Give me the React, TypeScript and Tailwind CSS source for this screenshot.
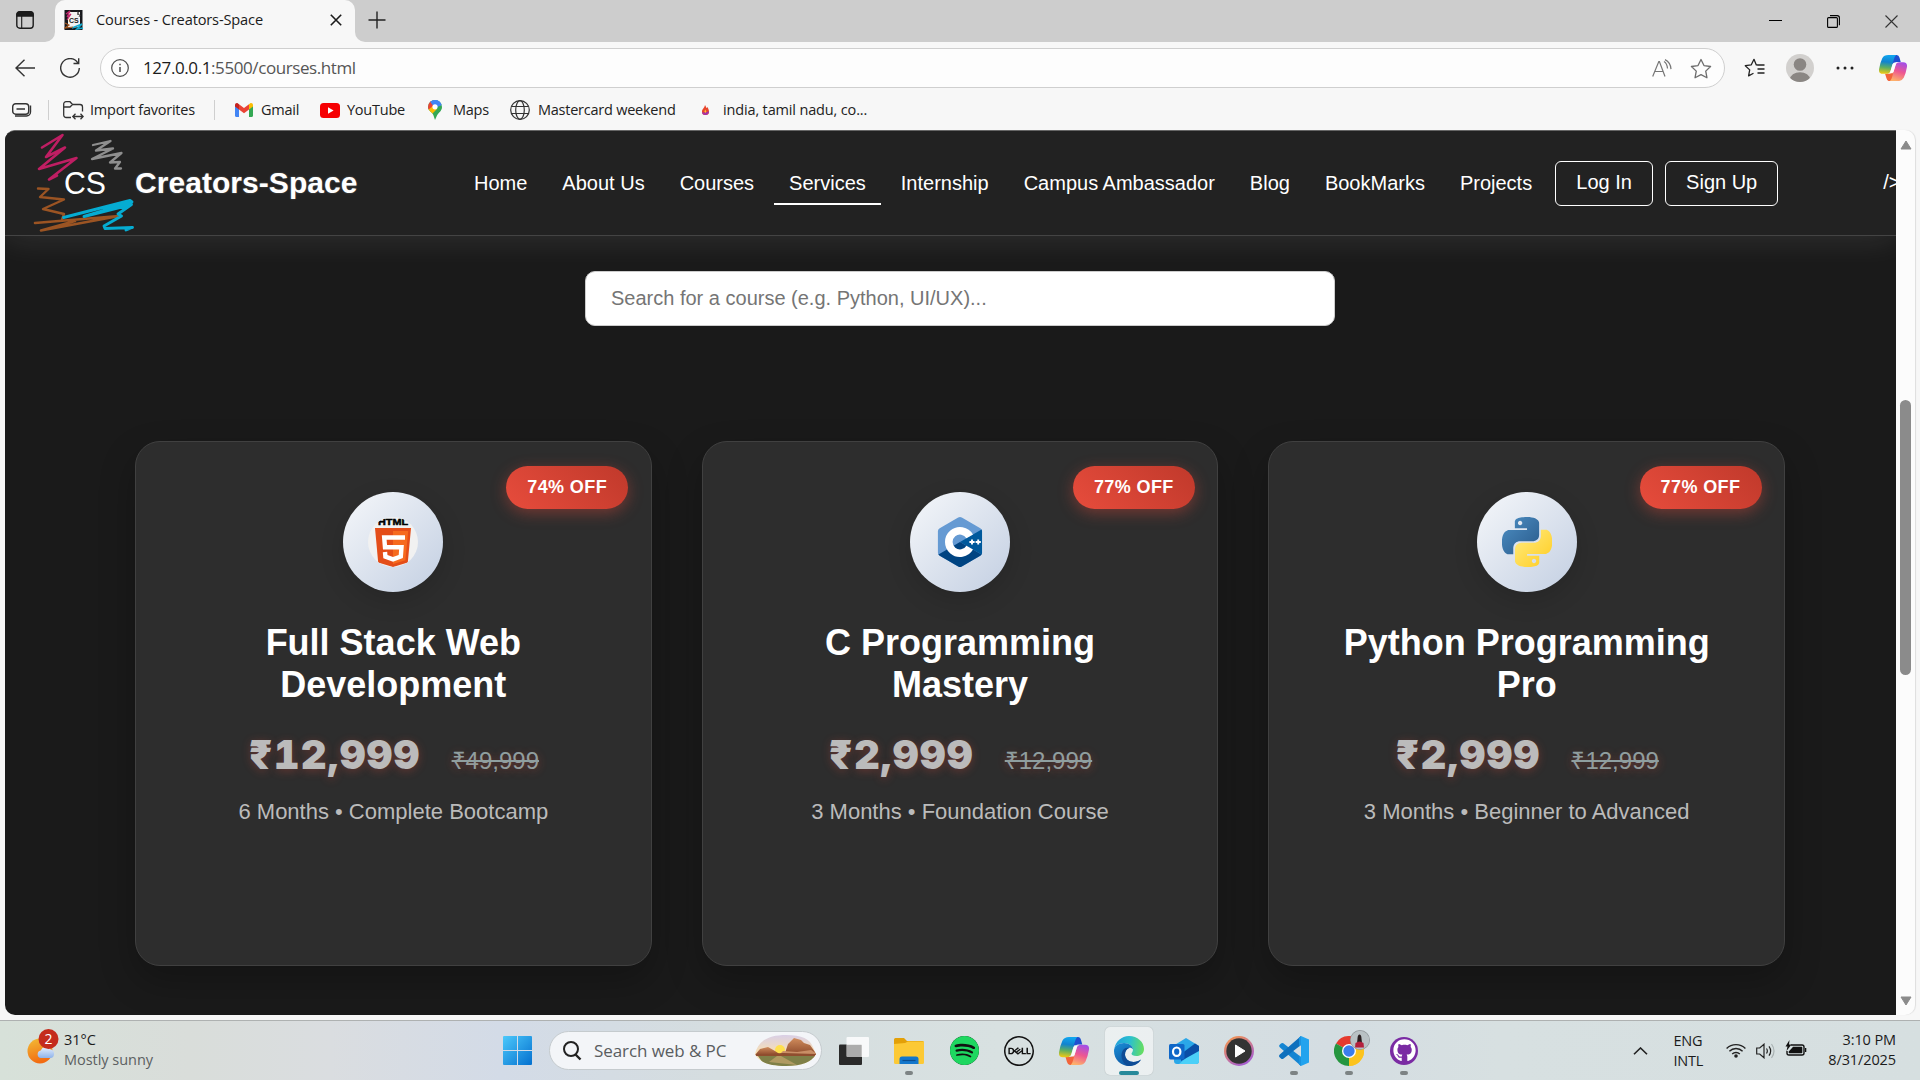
import React from "react";
import { SiDell, SiSpotify } from "react-icons/si";
import { FaGithub } from "react-icons/fa";

/* ---------- browser chrome icons ---------- */

function TabActionsIcon() {
  return (
    <svg width="18" height="18" viewBox="0 0 18 18" fill="none" stroke="#1b1b1b" strokeWidth="1.4">
      <rect x="0.8" y="0.8" width="16.4" height="16.4" rx="3" />
      <path d="M1 3.5A2.6 2.6 0 0 1 3.5 1h11A2.6 2.6 0 0 1 17 3.500V5H1z" fill="#1b1b1b" />
      <path d="M5.700 5v12" strokeWidth="1.1" />
    </svg>
  );
}

function Favicon() {
  return (
    <svg width="20" height="20" viewBox="0 0 20 20" fill="none">
      <rect x="0.500" width="18" height="20" fill="#17181c" />
      <path d="M4 2h12v15l-12 1z" fill="#f3f3f3" />
      <path d="M2 4l4-3-3 6 4-3-4 6" stroke="#c2266b" strokeWidth="1.2" />
      <path d="M13 2l2 1-2 1 3 1-1 2" stroke="#555" strokeWidth="1" />
      <text x="5" y="12.500" fontSize="7" fontWeight="700" fill="#222" fontFamily="Liberation Sans">CS</text>
      <path d="M8 18l10-4-5 5 6-1" stroke="#12abd0" strokeWidth="1.500" />
      <path d="M1 13l4 2-4 3 8-1" stroke="#a3561f" strokeWidth="1.2" />
    </svg>
  );
}

function StarPath({ d = "M10 1.300l2.700 5.500 6 .9-4.400 4.200 1.100 6L10 15.100 4.600 17.900l1.100-6L1.300 7.700l6-.9z" }: { d?: string }) {
  return <path d={d} />;
}

function CopilotIcon({ w = 30, id }: { w?: number; id: string }) {
  return (
    <svg width={w} height={(w * 28) / 30} viewBox="0 0 30 28">
      <defs>
        <linearGradient id={id + "l"} x1="0.300" y1="0" x2="0.200" y2="1">
          <stop offset="0" stopColor="#10a5ee" />
          <stop offset="0.350" stopColor="#1183cf" />
          <stop offset="0.650" stopColor="#5cae62" />
          <stop offset="1" stopColor="#f6cb10" />
        </linearGradient>
        <linearGradient id={id + "r"} x1="0.700" y1="0" x2="0.400" y2="1">
          <stop offset="0" stopColor="#a24ee8" />
          <stop offset="0.500" stopColor="#ee5791" />
          <stop offset="1" stopColor="#fdb06a" />
        </linearGradient>
      </defs>
      <path d="M12 0H19Q21.300 0 22 3L23.300 7.500H19Q16 7.500 15 10L12 8z" fill="#1f4fd0" />
      <path d="M18 28H11Q8.800 28 8 25L6.500 20H11Q14 20 15 18L18 20z" fill="#f2643a" />
      <path d="M10 0H18.500Q16.700 1 15.800 5L12.500 16.500Q11.500 20.200 8 20.200H4Q-.8 20 .1 15Q1.300 8 3.500 3.500Q5.300 0 10 0Z" fill={`url(#${id}l)`} />
      <path d="M20 28H11.500Q13.300 27 14.200 23L17.500 11.500Q18.500 7.800 22 7.800H26Q30.800 8 29.900 13Q28.700 20 26.500 24.500Q24.700 28 20 28Z" fill={`url(#${id}r)`} />
      <path d="M15.200 8.300L18.300 9 15 19.500 11.800 19z" fill="#fff" fillOpacity="0.850" />
    </svg>
  );
}

function GmailIcon() {
  return (
    <svg width="18" height="14" viewBox="0 0 18 14">
      <path d="M0 2v10.800c0 .7.500 1.200 1.200 1.200H4V5.500z" fill="#4285f4" />
      <path d="M18 2v10.800c0 .7-.5 1.200-1.200 1.200H14V5.500z" fill="#34a853" />
      <path d="M14 1.200V6.500l4-3V2c0-1.700-1.800-2.500-3-1.500z" fill="#fbbc04" />
      <path d="M0 2v1.500l4 3V1.200L3 .5C1.800-.5 0 .3 0 2z" fill="#c5221f" />
      <path d="M4 6.500V1.200l5 3.800 5-3.800v5.300l-5 3.800z" fill="#ea4335" />
    </svg>
  );
}

function MapsIcon() {
  return (
    <svg width="14" height="20" viewBox="0 0 14 20">
      <defs>
        <clipPath id="pin">
          <path d="M7 0a7 7 0 0 1 7 7c0 4-3.500 5.500-5 8.500L7 20l-1.500-4.500C4.500 12 0 11 0 7a7 7 0 0 1 7-7z" />
        </clipPath>
      </defs>
      <g clipPath="url(#pin)">
        <rect width="14" height="20" fill="#34a853" />
        <path d="M0 0h14v5L7 8z" fill="#4285f4" />
        <path d="M0 0l2-1 4 7-6 5z" fill="#ea4335" />
        <path d="M0 10l5-4 4 3-6 6H0z" fill="#fbbc04" />
        <path d="M2 1.500L6 0h8L6 7z" fill="#4285f4" />
      </g>
      <circle cx="7" cy="6.800" r="2.600" fill="#fff" />
    </svg>
  );
}

/* ---------- site artwork ---------- */

function SiteLogo() {
  return (
    <svg className="mb-[3px] shrink-0" width="104" height="100" viewBox="32 131 104 100" fill="none" strokeLinecap="round" strokeLinejoin="round">
      <path d="M42 146.500L62.500 134 46 156 65 146.500 39 168 76.500 157 49 178.500 57 174.500" stroke="#bf1e63" strokeWidth="2.600" />
      <path d="M93 144L110.500 140 96 149.500 113 147.500 92 158 121.500 152 110 161.500 120 161 115 167.500 121 167.500" stroke="#8e8e8e" strokeWidth="2.300" />
      <path d="M38 187.500L48.500 188 40 196 64 198.500 43 208 64 213 62 218.500" stroke="#9b5423" strokeWidth="2.400" />
      <path d="M35 222L119 215 41 229.500 75 220" stroke="#9b5423" strokeWidth="2.600" />
      <path d="M63.500 216.500L130 199.500 132 201 84 215.500 131.500 203.500 118 213 121.500 215 104 225 105 227.500 132.500 226.500 126 229" stroke="#05acd2" strokeWidth="2.900" />
      <text x="64" y="192.500" fontSize="30.500" fill="#ffffff" fontFamily="Liberation Sans" textLength="42" lengthAdjust="spacingAndGlyphs">CS</text>
    </svg>
  );
}

function HtmlLogo() {
  return (
    <svg width="50" height="50" viewBox="0 0 50 50">
      <defs>
        <clipPath id="htmlDisc">
          <circle cx="25" cy="25" r="25" />
        </clipPath>
      </defs>
      <g clipPath="url(#htmlDisc)">
        <rect width="50" height="50" fill="#f1f1f1" />
        <text x="10" y="8" fontSize="9.800" fontWeight="800" fill="#000" stroke="#000" strokeWidth="0.500" fontFamily="Liberation Sans" textLength="30" lengthAdjust="spacingAndGlyphs">HTML</text>
        <path d="M7 11h36l-3.200 34.500L25 50 10.200 45.500z" fill="#e44d18" />
        <path d="M25 14h15.200l-2.800 29.300L25 47z" fill="#f66a1e" />
        <path d="M37 20.500H16.200l.8 9.700h16.500l-.7 9.300-7.800 2.800-7.600-2.600-.4-4.700" fill="none" stroke="#fff" strokeWidth="4.400" />
      </g>
    </svg>
  );
}

function CppLogo() {
  return (
    <svg width="50" height="50" viewBox="0 0 50 50">
      <defs>
        <clipPath id="hex">
          <path d="M23.200.5q1.800-1 3.600 0l18.500 10.700q1.800 1 1.800 3.100v21.400q0 2.100-1.800 3.100L26.800 49.500q-1.800 1-3.600 0L4.700 38.800q-1.800-1-1.800-3.100V14.300q0-2.100 1.800-3.100z" />
        </clipPath>
      </defs>
      <g clipPath="url(#hex)">
        <rect width="50" height="50" fill="#659ad3" />
        <path d="M25 25L47 12.300V37.800z" fill="#00599c" />
        <path d="M3 37.700L25 25 47 37.700V50H3z" fill="#004482" />
      </g>
      <path d="M34.700 19.400A11.200 11.200 0 1 0 34.700 30.600" fill="none" stroke="#fff" strokeWidth="7.600" />
      <path d="M34.400 25h5.200M37 22.400v5.200M40.600 25h5.200M43.200 22.400v5.200" stroke="#fff" strokeWidth="1.900" />
    </svg>
  );
}

function PythonLogo() {
  return (
    <svg width="50" height="50" viewBox="0 0 24 24">
      <defs>
        <linearGradient id="pyBlue" x1="0" y1="0" x2="1" y2="1">
          <stop offset="0" stopColor="#4d8fc4" />
          <stop offset="1" stopColor="#28598a" />
        </linearGradient>
        <linearGradient id="pyYellow" x1="0" y1="0" x2="1" y2="1">
          <stop offset="0.200" stopColor="#ffe66f" />
          <stop offset="0.800" stopColor="#ffd233" />
        </linearGradient>
      </defs>
      <path
        fill="url(#pyBlue)"
        d="M14.25.18l.9.2.73.26.59.3.45.32.34.34.25.34.16.33.1.3.04.26.02.2-.01.13V8.5l-.05.63-.13.55-.21.46-.26.38-.3.31-.33.25-.35.19-.35.14-.33.1-.3.07-.26.04-.21.02H8.77l-.69.05-.59.14-.5.22-.41.27-.33.32-.27.35-.2.36-.15.37-.1.35-.07.32-.04.27-.02.21v3.06H3.17l-.21-.03-.28-.07-.32-.12-.35-.18-.36-.26-.36-.36-.35-.46-.32-.59-.28-.73-.21-.88-.14-1.05-.05-1.23.06-1.22.16-1.04.24-.87.32-.71.36-.57.4-.44.42-.33.42-.24.4-.16.36-.1.32-.05.24-.01h.16l.06.01h8.16v-.83H6.18l-.01-2.75-.02-.37.05-.34.11-.31.17-.28.25-.26.31-.23.38-.2.44-.18.51-.15.58-.12.64-.1.71-.06.77-.04.84-.02 1.27.05zm-6.3 1.98l-.23.33-.08.41.08.41.23.34.33.22.41.09.41-.09.33-.22.23-.34.08-.41-.08-.41-.23-.33-.33-.22-.41-.09-.41.09z"
      />
      <path
        fill="url(#pyYellow)"
        d="M21.1 6.11l.28.06.32.12.35.18.36.27.36.35.35.47.32.59.28.73.21.88.14 1.04.05 1.23-.06 1.23-.16 1.04-.24.86-.32.71-.36.57-.4.45-.42.33-.42.24-.4.16-.36.09-.32.05-.24.02-.16-.01h-8.22v.82h5.84l.01 2.76.02.36-.05.34-.11.31-.17.29-.25.25-.31.24-.38.2-.44.17-.51.15-.58.13-.64.09-.71.07-.77.04-.84.01-1.27-.04-1.07-.14-.9-.2-.73-.25-.59-.3-.45-.33-.34-.34-.25-.34-.16-.33-.1-.3-.04-.25-.02-.2.01-.13v-5.34l.05-.64.13-.54.21-.46.26-.38.3-.32.33-.24.35-.2.35-.14.33-.1.3-.06.26-.04.21-.02.13-.01h5.84l.69-.05.59-.14.5-.21.41-.28.33-.32.27-.35.2-.36.15-.36.1-.35.07-.32.04-.28.02-.21V6.07h2.09l.14.01zm-6.47 14.25l-.23.33-.08.41.08.41.23.33.33.23.41.08.41-.08.33-.23.23-.33.08-.41-.08-.41-.23-.33-.33-.23-.41-.08-.41.08z"
      />
    </svg>
  );
}

/* ---------- browser ---------- */

function TitleBar() {
  return (
    <div className="flex h-[42px] bg-[#cdcdcd]">
      <div className="w-[55px] bg-[#f7f7f7]">
        <div className="flex h-[42px] items-center rounded-br-[10px] bg-[#cdcdcd] pb-0.5 pl-4">
          <TabActionsIcon />
        </div>
      </div>
      <div className="flex w-[300px] items-center rounded-t-[10px] bg-[#f7f7f7] pb-[2px] pl-[9px]">
        <Favicon />
        <span className="ml-3 w-[170px] whitespace-nowrap text-[14.600px] tracking-[-0.150px] text-[#1b1b1b]">Courses - Creators-Space</span>
        <svg className="ml-[64px]" width="12" height="12" viewBox="0 0 12 12" stroke="#1b1b1b" strokeWidth="1.600">
          <path d="M.8.8l10.400 10.400M11.200.8L.8 11.200" />
        </svg>
      </div>
      <div className="flex-1 bg-[#f7f7f7]">
        <div className="flex h-[42px] items-center justify-between rounded-bl-[10px] bg-[#cdcdcd] pb-[3px] pl-[13px]">
          <svg width="18" height="18" viewBox="0 0 18 18" stroke="#222" strokeWidth="1.400">
            <path d="M9 .5v17M.5 9h17" />
          </svg>
          <div className="flex items-center gap-[45px] pr-[22px] pt-1">
            <svg width="13" height="13" viewBox="0 0 13 13"><path d="M0 5.500h13" stroke="#000" /></svg>
            <svg width="13" height="13" viewBox="0 0 13 13" fill="none" stroke="#000" strokeWidth="1.100">
              <rect x="0.600" y="2.600" width="9.800" height="9.800" rx="1" />
              <path d="M3 .6h7.200a2.200 2.200 0 0 1 2.200 2.200v7.400" />
            </svg>
            <svg width="13" height="13" viewBox="0 0 13 13" stroke="#333" strokeWidth="1.100"><path d="M.5.5l12 12M12.500.5l-12 12" /></svg>
          </div>
        </div>
      </div>
    </div>
  );
}

function AddressBar() {
  return (
    <div className="flex h-[52px] items-center bg-[#f7f7f7]">
      <svg className="ml-[15px]" width="20" height="18" viewBox="0 0 20 18" fill="none" stroke="#333" strokeWidth="1.400">
        <path d="M20 9H1M9.500.7L1 9l8.500 8.300" />
      </svg>
      <svg className="ml-[25px]" width="20" height="20" viewBox="0 0 20 20" fill="none" stroke="#333" strokeWidth="1.400">
        <path d="M17.800 4.800A9.300 9.300 0 1 0 19.300 10M18.700.3v5.200h-5.200" />
      </svg>
      <div className="ml-5 flex h-10 w-[1625px] items-center rounded-full border border-[#cfcfcf] bg-[#fdfdfd] pl-2.5">
        <svg width="18" height="18" viewBox="0 0 18 18" fill="none" stroke="#4a4a4a" strokeWidth="1.200">
          <circle cx="9" cy="9" r="8.300" />
          <path d="M9 8v5M9 4.800v1.400" strokeWidth="1.500" />
        </svg>
        <span className="ml-3.5 flex-1 whitespace-nowrap text-[17px] tracking-[-0.410px] text-[#555]">
          <span className="text-[#1b1b1b]">127.0.0.1</span>:5500/courses.html
        </span>
        <svg className="mr-[18px]" width="20" height="18" viewBox="0 0 20 18" fill="none" stroke="#767676" strokeWidth="1.200">
          <path d="M.7 17.500L6.800 2.500h.6l5.600 15M2.800 12.500h8.300M12 2.500c2 1.300 3.300 4 3.500 7M13 .6c3.500 1.800 5.800 5.500 6 9.500" />
        </svg>
        <svg className="mr-[12px]" width="22" height="21" viewBox="0 0 20 19" fill="none" stroke="#6d6d6d" strokeWidth="1.200" strokeLinejoin="round">
          <StarPath />
        </svg>
      </div>
      <svg className="ml-[19px]" width="21" height="20" viewBox="0 0 21 20" fill="none" stroke="#222" strokeWidth="1.300" strokeLinejoin="round">
        <path d="M14 7.200l-1.700-.3L10 1.300 7.300 6.800l-6 .9 4.400 4.200-1.100 6L9.500 15.300M12.500 7h8M13.500 11h7M13.500 15h7" />
      </svg>
      <svg className="ml-[21px]" width="28" height="28" viewBox="0 0 28 28">
        <defs><clipPath id="profile"><circle cx="14" cy="14" r="14" /></clipPath></defs>
        <circle cx="14" cy="14" r="14" fill="#d2d0ce" />
        <g fill="#8a8683" clipPath="url(#profile)">
          <circle cx="14" cy="10.500" r="6.300" />
          <ellipse cx="14" cy="25.500" rx="10" ry="7.300" />
        </g>
      </svg>
      <svg className="ml-[22px]" width="18" height="4" viewBox="0 0 18 4" fill="#222">
        <circle cx="2" cy="2" r="1.500" /><circle cx="9" cy="2" r="1.500" /><circle cx="16" cy="2" r="1.500" />
      </svg>
      <div className="ml-[25px]"><CopilotIcon w={28} id="cpA" /></div>
    </div>
  );
}

function FavoritesBar() {
  return (
    <div className="flex h-9 items-center whitespace-nowrap bg-[#f7f7f7] pb-[4px] text-[14.500px] tracking-[-0.240px] text-[#222]">
      <svg className="ml-3" width="20" height="15" viewBox="0 0 20 15" fill="none" stroke="#333" strokeWidth="1.400">
        <rect x="0.700" y="0.700" width="16" height="10.500" rx="3" />
        <path d="M4.500 6h8.500M18.500 2.500v6.500a4 4 0 0 1-4 4H3" />
      </svg>
      <div className="ml-4 h-5 w-px bg-[#cfcfcf]" />
      <svg className="ml-3.5" width="21" height="19" viewBox="0 0 21 19" fill="none" stroke="#333" strokeWidth="1.300">
        <path d="M8 16.500H3.200A2.500 2.500 0 0 1 .7 14V3A2.300 2.300 0 0 1 3 .7h4l2.500 2.800H17A2.500 2.500 0 0 1 19.500 6v4.500M.7 6H7l2.500-2.500M10 15.500h10M12.500 12.800L9.800 15.500l2.700 2.700M17.500 12.800l2.700 2.700-2.700 2.700" />
      </svg>
      <span className="ml-1.5 w-[106px]">Import favorites</span>
      <div className="ml-[18px] h-5 w-px bg-[#cfcfcf]" />
      <div className="ml-5"><GmailIcon /></div>
      <span className="ml-[8px] w-[59px]">Gmail</span>
      <svg width="20" height="15" viewBox="0 0 20 15"><rect width="20" height="15" rx="3.500" fill="#f60002" /><path d="M8 4.200l5.600 3.300L8 10.800z" fill="#fff" /></svg>
      <span className="ml-[7px] w-[81px]">YouTube</span>
      <MapsIcon />
      <span className="ml-[11px] w-[57px]">Maps</span>
      <svg width="20" height="20" viewBox="0 0 20 20" fill="none" stroke="#333" strokeWidth="1.200">
        <circle cx="10" cy="10" r="9.300" /><ellipse cx="10" cy="10" rx="4.300" ry="9.300" /><path d="M1.500 6.500h17M1.500 13.500h17" />
      </svg>
      <span className="ml-2 w-[164px]">Mastercard weekend</span>
      <svg width="7" height="10" viewBox="0 0 7 10">
        <path d="M3 0c1 1.500 1 2 1.500 3C5 3 5 2.500 5.300 2 6.500 4 7 5 7 6.500A3.400 3.400 0 0 1 3.500 10 3.400 3.400 0 0 1 0 6.500C0 4 2.500 3 3 0z" fill="#e8452c" />
        <path d="M0 7c2 1 5 .5 6.900-1A3.400 3.400 0 0 1 3.500 10 3.400 3.400 0 0 1 0 7z" fill="#a533a5" />
        <path d="M3.200 4.500l1.200 2-1 1.500-1-1.500z" fill="#ffc23d" />
      </svg>
      <span className="ml-3.5 tracking-[-0.150px]">india, tamil nadu, co...</span>
    </div>
  );
}

/* ---------- web page ---------- */

const links = ["Home", "About Us", "Courses", "Services", "Internship", "Campus Ambassador", "Blog", "BookMarks", "Projects"];

function SiteHeader() {
  return (
    <header className="relative flex h-[105px] items-center border-b border-[#444] bg-[#222] pl-[27px] text-white shadow-[0_4px_30px_rgba(255,255,255,0.1)]">
      <SiteLogo />
      <span className="-ml-px mb-px w-[324px] shrink-0 text-[30px] font-bold tracking-[0.050px] [text-shadow:0_0_2px_rgba(255,255,255,0.3)]">Creators-Space</span>
      <nav className="mb-px flex shrink-0 gap-[5px] whitespace-nowrap text-[20px]">
        {links.map((l) => (
          <a key={l} className={"border-b-2 px-[15px] pb-[5px] pt-[7px] leading-[30px] " + (l === "Services" ? "border-white" : "border-transparent")}>
            {l}
          </a>
        ))}
      </nav>
      <div className="ml-2 flex shrink-0 gap-3 whitespace-nowrap text-[20px]">
        <a className="flex h-[45px] w-[98px] items-center justify-center rounded-[6px] border border-white pb-0.5">Log In</a>
        <a className="flex h-[45px] w-[113px] items-center justify-center rounded-[6px] border border-white pb-0.5">Sign Up</a>
      </div>
      <span className="mb-0.5 ml-[105px] shrink-0 text-[20px]">/&gt;</span>
    </header>
  );
}

interface Course {
  name: string[];
  off: string;
  price: string;
  old: string;
  info: string;
  logo: React.ReactNode;
}

const courses: Course[] = [
  { name: ["Full Stack Web", "Development"], off: "74% OFF", price: "₹12,999", old: "₹49,999", info: "6 Months • Complete Bootcamp", logo: <HtmlLogo /> },
  { name: ["C Programming", "Mastery"], off: "77% OFF", price: "₹2,999", old: "₹12,999", info: "3 Months • Foundation Course", logo: <CppLogo /> },
  { name: ["Python Programming", "Pro"], off: "77% OFF", price: "₹2,999", old: "₹12,999", info: "3 Months • Beginner to Advanced", logo: <PythonLogo /> },
];

function CourseCard({ c }: { c: Course }) {
  return (
    <article className="relative flex h-[525px] flex-col items-center rounded-[25px] border border-[#404040] bg-[#2d2d2d] pt-[50px] text-center shadow-[0_15px_35px_rgba(0,0,0,0.25)]">
      <span className="absolute right-[22.500px] top-[24px] flex h-[43px] w-[122px] items-center justify-center rounded-full bg-[linear-gradient(45deg,#e74c3c,#c0392b)] text-[18px] font-bold tracking-[0.400px] text-white shadow-[0_4px_15px_rgba(231,76,60,0.4)]">
        {c.off}
      </span>
      <div className="flex size-[100px] items-center justify-center rounded-full bg-[linear-gradient(135deg,#f5f7fa,#c3cfe2)] shadow-[0_8px_25px_rgba(0,0,0,0.15)]">
        {c.logo}
      </div>
      <h3 className="mt-[30px] text-[36px] font-bold leading-[42px] text-white">
        {c.name[0]}
        <br />
        {c.name[1]}
      </h3>
      <div className="mt-[21px] flex h-[56px] items-baseline gap-[31px] pl-px [text-shadow:0_2px_10px_rgba(231,76,60,0.3)]">
        <span className="font-['Inter'] text-[40px] font-black tabular-nums leading-[56px] tracking-[1.200px] text-[#bbb]">{c.price}</span>
        <span className="text-[24px] text-[#8f9fa0] line-through">{c.old}</span>
      </div>
      <p className="mt-[14px] text-[22px] leading-[30px] text-[#bbb]">{c.info}</p>
    </article>
  );
}

function PageView() {
  return (
    <div className="flex h-[885px] bg-[#f7f7f7] pl-[5px] pr-[4px] font-['Liberation_Sans',Arial,sans-serif]">
      <div className="w-[1891px] overflow-hidden rounded-l-[10px] border-t border-[#666] bg-[#1a1a1a]">
        <SiteHeader />
        <div className="ml-[580px] flex pt-[35px]">
          <input
            className="h-[55px] w-[750px] rounded-[10px] border border-[#ccc] bg-white px-[25px] text-[20px] placeholder:text-[#757575]"
            placeholder="Search for a course (e.g. Python, UI/UX)..."
          />
        </div>
        <div className="ml-[130px] mt-[115px] grid w-[1650px] grid-cols-3 gap-[50px]">
          {courses.map((c) => (
            <CourseCard key={c.name[0]} c={c} />
          ))}
        </div>
      </div>
      <div className="flex w-[19px] flex-col items-center rounded-r-[10px] bg-[#fcfcfc] pt-[10px] shadow-[1px_0_1px_rgba(0,0,0,0.1)]">
        <svg width="12" height="10" viewBox="0 0 12 10"><path d="M6 1l5 8H1z" fill="#8b8b8b" stroke="#8b8b8b" strokeLinejoin="round" /></svg>
        <div className="mt-[250px] h-[275px] w-[11px] rounded-full bg-[#8b8b8b]" />
        <svg className="mt-[321px]" width="12" height="10" viewBox="0 0 12 10"><path d="M6 9l5-8H1z" fill="#8b8b8b" stroke="#8b8b8b" strokeLinejoin="round" /></svg>
      </div>
    </div>
  );
}

/* ---------- taskbar ---------- */

function WeatherIcon() {
  return (
    <svg width="33" height="36" viewBox="0 0 33 36">
      <defs>
        <linearGradient id="sun" x1="0" y1="0" x2="0.300" y2="1">
          <stop offset="0" stopColor="#f2bd36" /><stop offset="1" stopColor="#f26c12" />
        </linearGradient>
        <linearGradient id="cloud" x1="0" y1="0" x2="0" y2="1">
          <stop offset="0" stopColor="#e6f0fd" /><stop offset="1" stopColor="#8fb3ea" />
        </linearGradient>
      </defs>
      <circle cx="13" cy="22" r="12.500" fill="url(#sun)" />
      <path d="M14 29a3.800 3.800 0 0 1-.3-7.500 5.500 5.500 0 0 1 9.600-1.200A4.500 4.500 0 0 1 24 29z" fill="url(#cloud)" />
      <circle cx="21.500" cy="10" r="10" fill="#c42b1c" />
      <text x="21.500" y="15" textAnchor="middle" fontSize="14" fill="#fff" fontFamily="Open Sans">2</text>
    </svg>
  );
}

function SearchScene() {
  return (
    <svg width="62" height="31" viewBox="0 0 62 31">
      <defs>
        <linearGradient id="sky" x1="0" y1="0" x2="0" y2="1">
          <stop offset="0" stopColor="#d9cfe6" /><stop offset="0.550" stopColor="#f7dfb5" />
        </linearGradient>
        <linearGradient id="rock" x1="0" y1="0" x2="0" y2="1">
          <stop offset="0" stopColor="#d08c5c" /><stop offset="1" stopColor="#8d4a2c" />
        </linearGradient>
        <clipPath id="scene"><path d="M31 0c16 0 24 4 27 12l3 7c-4 8-14 12-30 12S5 28 0 19C3 5 15 0 31 0z" /></clipPath>
      </defs>
      <g clipPath="url(#scene)">
        <rect width="62" height="31" fill="url(#sky)" />
        <circle cx="25" cy="15" r="5" fill="#ffe04d" />
        <path d="M30 18l3-9 6-6 7 2 3 3 6 2 7 10z" fill="url(#rock)" />
        <path d="M0 20l5-6 8-2 7 4 6 4z" fill="url(#rock)" />
        <path d="M24 20l4-4 14 1 14-2 6 4-4 4z" fill="#c98f66" />
        <path d="M0 20l28-2 34 1-4 4-58-2z" fill="#8f4e2f" />
        <path d="M3 21l57 0-8 10H10z" fill="#7f8048" />
        <path d="M22 21l-8 6 28 3-16-9z" fill="#b09a62" />
      </g>
    </svg>
  );
}

function EdgeIcon() {
  return (
    <svg width="30" height="30" viewBox="0 0 30 30">
      <defs>
        <linearGradient id="eTop" x1="0" y1="0.500" x2="1" y2="0.600">
          <stop offset="0" stopColor="#1f9fdb" /><stop offset="0.500" stopColor="#2bc0cf" /><stop offset="1" stopColor="#69df5c" />
        </linearGradient>
        <linearGradient id="eBot" x1="0" y1="0" x2="0.700" y2="1">
          <stop offset="0" stopColor="#1a8fd8" /><stop offset="1" stopColor="#0c4f9c" />
        </linearGradient>
      </defs>
      <path d="M.3 13C1.500 5.500 7.500 0 15 0c8.500 0 15 6 15 13 0 4.500-3.300 7-7.500 7-3.500 0-5-1-5-2.200 0-1 1.500-1.800 1.500-4.300C19 10 15 7 10 7 5 7 1.500 9.500.3 13z" fill="url(#eTop)" />
      <path d="M0 15C0 10 4.500 7 10 7c5 0 9 3 9 6.500-1-1.500-2.500-2-4-1.500-2.500 1-4 3.500-4 6.500 0 4.500 4 7.500 8.500 7.500 3 0 5.500-1 7.500-2.500-2.500 4.500-7 6.500-12 6.500C7 30 0 23.500 0 15z" fill="url(#eBot)" />
      <path d="M10 13c-4 4-3.500 12 3 16.800C19 30.500 24.500 27.500 27 23.500c-2 1.500-4.500 2.500-7.500 2.500-4.500 0-8.500-3-8.500-7.500 0-3 1.500-5.500 4-6.500-2-.5-3.500 0-5 1z" fill="#0e4c96" />
    </svg>
  );
}

function TaskApps() {
  const cells: { key: string; icon: React.ReactNode; mark?: "dot" | "active" }[] = [
    {
      key: "view",
      icon: (
        <svg width="30" height="28" viewBox="0 0 30 28">
          <rect y="7.500" width="23" height="20.500" rx="1" fill="#2a2a2a" />
          <rect x="7.500" width="22.500" height="20" rx="1" fill="#fff" fillOpacity="0.820" />
          <path d="M8 8h14.500v12H8z" fill="#9a9a9a" fillOpacity="0.700" />
        </svg>
      ),
    },
    {
      key: "files",
      mark: "dot",
      icon: (
        <svg width="30" height="28" viewBox="0 0 30 28">
          <path d="M0 2.500Q0 1 1.500 1H10l3 3h15.500Q30 4 30 5.500V14H0z" fill="#e3a008" />
          <path d="M0 7L11 6l3-1.500h16V25.500Q30 27 28.500 27H1.500Q0 27 0 25.500z" fill="#fcc935" />
          <path d="M5.500 27v-5q0-2.500 2.500-2.500h14q2.500 0 2.500 2.500v5z" fill="#1377cc" />
          <path d="M8.500 23.500h13" stroke="#0a4d90" strokeWidth="1.200" />
        </svg>
      ),
    },
    { key: "spotify", icon: <div className="rounded-full bg-[#111]"><SiSpotify size={29} color="#1ed760" /></div> },
    { key: "dell", icon: <SiDell size={30} color="#111" /> },
    { key: "copilot", icon: <CopilotIcon id="cpB" /> },
    { key: "edge", icon: <EdgeIcon />, mark: "active" },
    {
      key: "outlook",
      icon: (
        <svg width="30" height="28" viewBox="0 0 30 28">
          <path d="M4 9L17 1l13 8v15q0 3-3 3H8q-3 0-3-3z" fill="#2aa7e8" />
          <path d="M30 10v14q0 3-3 3H10z" fill="#4bd0f8" />
          <path d="M30 9v5L12 24V17L26 6.500z" fill="#0a4ea6" />
          <rect y="7" width="15.500" height="15.500" rx="1.500" fill="#0f67c8" />
          <ellipse cx="7.700" cy="14.700" rx="3.700" ry="4.200" fill="none" stroke="#fff" strokeWidth="2.200" />
        </svg>
      ),
    },
    {
      key: "media",
      icon: (
        <svg width="30" height="30" viewBox="0 0 30 30">
          <defs><linearGradient id="ring" x1="0" y1="0" x2="0.600" y2="1"><stop offset="0" stopColor="#fb9a42" /><stop offset="1" stopColor="#a65ed0" /></linearGradient></defs>
          <circle cx="15" cy="15" r="15" fill="url(#ring)" />
          <circle cx="15" cy="15" r="12.700" fill="#333" />
          <path d="M11.500 9v12L21 15z" fill="#fff" stroke="#fff" strokeLinejoin="round" />
        </svg>
      ),
    },
    {
      key: "code",
      mark: "dot",
      icon: (
        <svg width="30" height="30" viewBox="0 0 30 30">
          <path d="M22 0L30 3.500v23L22 30z" fill="#22a3ee" />
          <path d="M22 30L1 11.500q-1.500-1.300-.3-2.700L2 7.500q1-1 2.300-.2L22 21z" fill="#1585d2" />
          <path d="M22 0L.8 18.500q-1.400 1.300-.2 2.700L2 22.500q1 1 2.300.2L22 9z" fill="#0f70bd" />
          <path d="M20 1.500L22 0v9l-2 1.500zM20 28.500L22 30v-9l-2-1.500z" fill="#1a93df" />
        </svg>
      ),
    },
    {
      key: "chrome",
      mark: "dot",
      icon: (
        <div className="relative">
          <svg width="30" height="30" viewBox="0 0 30 30">
            <path d="M15 15L2 7.500A15 15 0 0 1 28 7.500z" fill="#e53a2e" />
            <path d="M15 15L28 7.500A15 15 0 0 1 15 30z" fill="#fcc31e" />
            <path d="M15 15L15 30A15 15 0 0 1 2 7.500z" fill="#25963f" />
            <path d="M15 8.200H28.400A15 15 0 0 1 15 30l6-11.500z" fill="#fcc31e" />
            <circle cx="15" cy="15" r="7" fill="#fff" />
            <circle cx="15" cy="15" r="5.700" fill="#3b7ded" />
          </svg>
          <svg className="absolute -right-[6px] -top-[6px]" width="20" height="20" viewBox="0 0 20 20">
            <defs><clipPath id="av"><circle cx="10" cy="10" r="9.300" /></clipPath></defs>
            <circle cx="10" cy="10" r="10" fill="#8f9599" />
            <g clipPath="url(#av)">
              <rect width="20" height="20" fill="#b9c1c4" />
              <path d="M7.500 8.500C7.500 3 11.500 3 11.500 8.500l.6 5H7z" fill="#2a1f20" />
              <path d="M5.500 13q4-3 8 0l.5 4.500H5z" fill="#b3203c" />
            </g>
          </svg>
        </div>
      ),
    },
    { key: "github", mark: "dot", icon: <div className="flex size-7 items-center justify-center rounded-full bg-[#7a2ba3]"><FaGithub size={23} color="#fff" /></div> },
  ];
  return (
    <div className="ml-[4.500px] flex h-full">
      {cells.map((c) => (
        <div key={c.key} className="flex w-[55px] items-center justify-center">
          <div
            className={
              "relative flex h-12 w-12 items-center justify-center rounded-[5px] " +
              (c.mark === "active" ? "bg-white/50 shadow-[0_0_1px_rgba(0,0,0,0.3)]" : "")
            }
          >
            {c.icon}
            {c.mark === "dot" && <div className="absolute bottom-0 h-1 w-2 rounded-full bg-[#7d8384]" />}
            {c.mark === "active" && <div className="absolute bottom-0 h-1 w-5 rounded-full bg-[#27899a]" />}
          </div>
        </div>
      ))}
    </div>
  );
}

function Taskbar() {
  return (
    <div className="mt-[5px] flex h-[60px] items-center border-t border-[#aeb1b1] bg-[linear-gradient(90deg,#d7e1d9_0,#d9ddda_190px,#dadde0_330px,#d3dbe7_500px,#d5dddf_720px,#d8e1e1_1000px,#d4dde2_1330px,#d7e0e1_1500px,#d6dfe0_1920px)] text-[#1b1b1b]">
      <div className="ml-[27px] flex w-[476px] pb-[3px]">
        <WeatherIcon />
        <div className="ml-1 pt-px text-[14.500px] leading-5 tracking-[-0.030px]">
          <div>31°C</div>
          <div className="text-[#5c6061]">Mostly sunny</div>
        </div>
      </div>
      <svg width="29" height="29" viewBox="0 0 29 29">
        <defs><linearGradient id="win" x1="0" y1="0" x2="1" y2="1"><stop offset="0" stopColor="#4cc9fb" /><stop offset="1" stopColor="#0470cf" /></linearGradient></defs>
        <path d="M1 0H14v14H0V1q0-1 1-1zM15 0h13q1 0 1 1v13H15zM0 15h14v14H1q-1 0-1-1zM15 15h14v13q0 1-1 1H15z" fill="url(#win)" />
      </svg>
      <div className="ml-[17px] flex h-[39px] w-[273px] items-center rounded-full border border-[#c5cbce] bg-[#f3f5f8] pl-[13px]">
        <svg width="19" height="20" viewBox="0 0 19 20" fill="none" stroke="#222" strokeWidth="2">
          <circle cx="8" cy="8" r="7" /><path d="M12.500 13.500l5 5" strokeWidth="2.400" />
        </svg>
        <span className="ml-[12px] w-[161px] whitespace-nowrap text-[17px] tracking-[-0.080px] text-[#5a5d60]">Search web &amp; PC</span>
        <SearchScene />
      </div>
      <TaskApps />
      <svg className="ml-[201px]" width="15" height="8" viewBox="0 0 15 8" fill="none" stroke="#222" strokeWidth="1.600"><path d="M1 7.300L7.500 1 14 7.300" /></svg>
      <div className="ml-[26px] w-[52px] whitespace-nowrap pt-px text-[14.500px] leading-5 tracking-[-0.200px]">
        <div>ENG</div>
        <div>INTL</div>
      </div>
      <svg width="20" height="15" viewBox="0 0 20 15" fill="none" stroke="#222" strokeWidth="1.400">
        <path d="M.6 5.500a13.300 13.300 0 0 1 18.800 0M3.400 8.300a9.300 9.300 0 0 1 13.200 0M6.200 11.100a5.400 5.400 0 0 1 7.600 0" />
        <circle cx="10" cy="13" r="1.800" fill="#222" stroke="none" />
      </svg>
      <svg className="ml-[10px]" width="20" height="16" viewBox="0 0 20 16" fill="none" stroke="#222" strokeWidth="1.200">
        <path d="M.7 5h3L8 1.200v13.600L3.700 11h-3zM10.500 5.500q1.700 2.500 0 5M13 3.300q3.300 4.700 0 9.400" />
        <path d="M15.500 1q5 7 0 14" stroke="#aab2b3" />
      </svg>
      <svg className="mb-[3px] ml-[9px]" width="22" height="18" viewBox="0 0 22 18">
        <path d="M6 5h11q2 0 2 2v6q0 2-2 2H4q-2 0-2-2v-2" fill="none" stroke="#111" strokeWidth="1.400" />
        <path d="M8 6.700h8.500q.8 0 .8.800v5q0 .8-.8.800H4.500q-.8 0-.8-.8v-1L7 8z" fill="#111" />
        <path d="M20 8h1.300v4H20z" fill="#111" /><path d="M4.500 0L.5 6.500h2L1.500 11 6.500 4.500H4z" fill="#111" />
      </svg>
      <div className="ml-auto mr-[24px] whitespace-nowrap pb-0.5 text-right text-[14.500px] leading-5 tracking-[-0.100px]">
        <div>3:10 PM</div>
        <div>8/31/2025</div>
      </div>
    </div>
  );
}

export default function App() {
  return (
    <div className="h-[1080px] w-[1920px] overflow-hidden bg-[#f7f7f7] font-['Open_Sans','Noto_Sans',sans-serif]">
      <TitleBar />
      <AddressBar />
      <FavoritesBar />
      <PageView />
      <Taskbar />
    </div>
  );
}
